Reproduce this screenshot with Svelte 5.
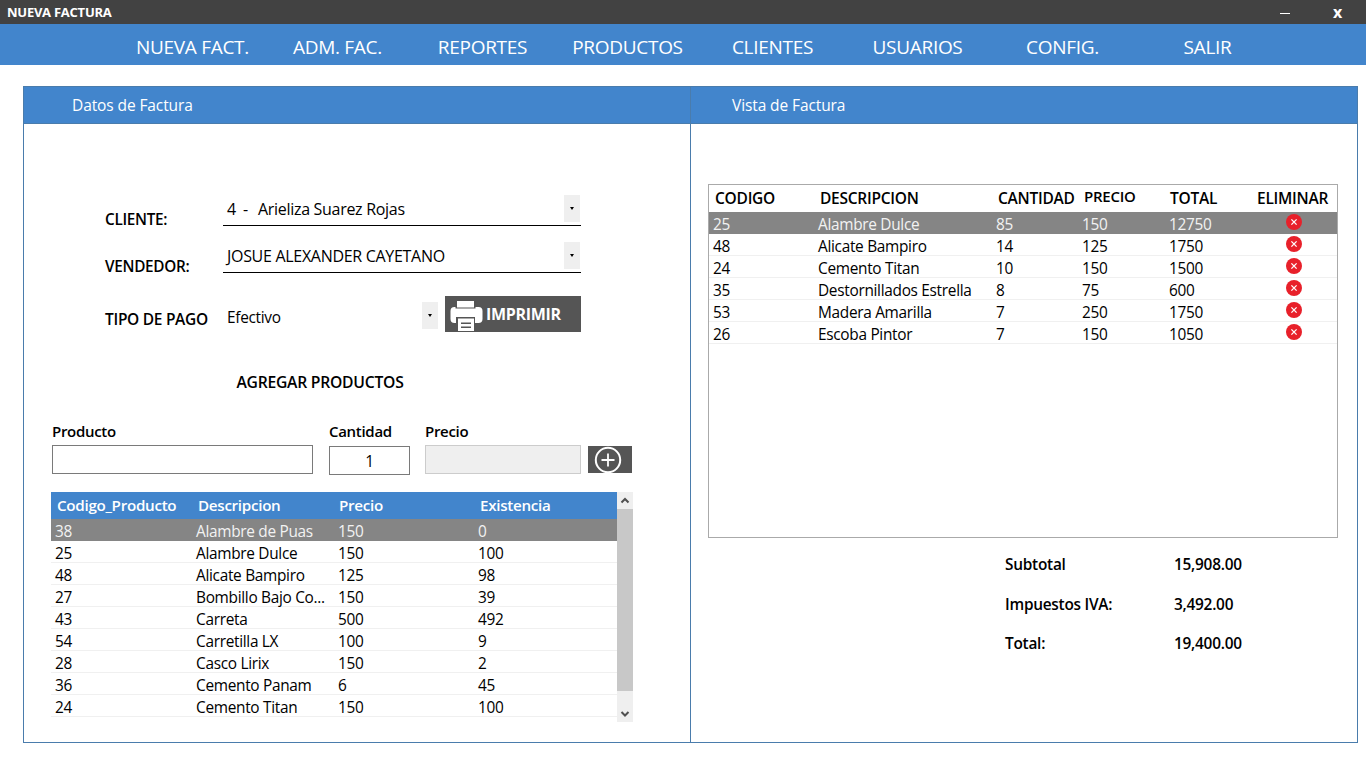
<script>
  const nav = ['NUEVA FACT.', 'ADM. FAC.', 'REPORTES', 'PRODUCTOS', 'CLIENTES', 'USUARIOS', 'CONFIG.', 'SALIR'];
  const productos = [
    ['38', 'Alambre de Puas', '150', '0'],
    ['25', 'Alambre Dulce', '150', '100'],
    ['48', 'Alicate Bampiro', '125', '98'],
    ['27', 'Bombillo Bajo Co...', '150', '39'],
    ['43', 'Carreta', '500', '492'],
    ['54', 'Carretilla LX', '100', '9'],
    ['28', 'Casco Lirix', '150', '2'],
    ['36', 'Cemento Panam', '6', '45'],
    ['24', 'Cemento Titan', '150', '100']
  ];
  const factura = [
    ['25', 'Alambre Dulce', '85', '150', '12750'],
    ['48', 'Alicate Bampiro', '14', '125', '1750'],
    ['24', 'Cemento Titan', '10', '150', '1500'],
    ['35', 'Destornillados Estrella', '8', '75', '600'],
    ['53', 'Madera Amarilla', '7', '250', '1750'],
    ['26', 'Escoba Pintor', '7', '150', '1050']
  ];
  const totales = [['Subtotal', '15,908.00'], ['Impuestos IVA:', '3,492.00'], ['Total:', '19,400.00']];
</script>

<div class="page">
  <header class="title">
    <span class="title-text">NUEVA FACTURA</span>
    <span class="win-min"></span>
    <span class="win-close">x</span>
  </header>
  <nav class="nav">
    {#each nav as item}<span>{item}</span>{/each}
  </nav>

  <main class="panel">
    <section class="side">
      <h2>Datos de Factura</h2>
      <div class="form">
        <div class="row">
          <label>CLIENTE:</label>
          <div class="combo"><span><b>4</b>Arieliza Suarez Rojas</span><i class="arrow"></i></div>
        </div>
        <div class="row second">
          <label>VENDEDOR:</label>
          <div class="combo"><span>JOSUE ALEXANDER CAYETANO</span><i class="arrow"></i></div>
        </div>
        <div class="row third">
          <label>TIPO DE PAGO</label>
          <div class="pay">
            <span class="pay-value">Efectivo</span>
            <i class="arrow"></i>
            <button class="print">
              <svg width="33" height="33" viewBox="0 0 33 33">
                <path fill="#fff" d="M4.500 7h24a4 4 0 0 1 4 4v8a4 4 0 0 1-4 4H25v-6H6v6H4.500a4 4 0 0 1-4-4v-8a4 4 0 0 1 4-4z"/>
                <path fill="#555" d="M5.500 0h20v8.500h-20z"/>
                <path fill="#fff" d="M7 1h17v6.500H7z"/>
                <path fill="#fff" d="M8 18.500h16V31H8z"/>
                <path fill="#555" d="M11 22.500h10v1.400H11zM11 26.500h10v1.400H11z"/>
              </svg>
              <span>IMPRIMIR</span>
            </button>
          </div>
        </div>
      </div>

      <h3>AGREGAR PRODUCTOS</h3>

      <div class="fields">
        <div class="f f-prod"><label>Producto</label><div class="input"></div></div>
        <div class="f f-cant"><label>Cantidad</label><div class="input qty">1</div></div>
        <div class="f f-prec"><label>Precio</label><div class="input off"></div></div>
        <button class="add" aria-label="Agregar">
          <svg width="28" height="28" viewBox="0 0 28 28" fill="none" stroke="#fff">
            <circle cx="14" cy="14" r="12.200" stroke-width="2"/>
            <path d="M14 7.500v13M7.500 14h13" stroke-width="1.800"/>
          </svg>
        </button>
      </div>

      <div class="prod-wrap">
        <div class="prod-table">
          <div class="prod-row head">
            <span>Codigo_Producto</span><span>Descripcion</span><span>Precio</span><span>Existencia</span>
          </div>
          {#each productos as p, i}
            <div class="prod-row" class:sel={i === 0}>
              {#each p as c}<span>{c}</span>{/each}
            </div>
          {/each}
        </div>
        <div class="scroll">
          <svg class="chev" width="16" height="17" viewBox="0 0 16 17"><path d="M4.500 10.500 8 7l3.500 3.500" fill="none" stroke="#505050" stroke-width="2"/></svg>
          <div class="thumb"></div>
          <svg class="chev" width="16" height="31" viewBox="0 0 16 31"><path d="M4.500 21 8 24.500l3.500-3.500" fill="none" stroke="#505050" stroke-width="2"/></svg>
        </div>
      </div>
    </section>

    <section class="side right">
      <h2>Vista de Factura</h2>
      <div class="inv">
        <div class="inv-row inv-head">
          <span>CODIGO</span><span>DESCRIPCION</span><span>CANTIDAD</span><span class="up">PRECIO</span><span>TOTAL</span><span>ELIMINAR</span>
        </div>
        {#each factura as r, i}
          <div class="inv-row" class:sel={i === 0}>
            {#each r as c}<span>{c}</span>{/each}
            <span class="del">
              <svg width="16" height="16" viewBox="0 0 16 16">
                <circle cx="8" cy="8" r="8" fill="#e8202a"/>
                <path d="M5.400 5.400l5.200 5.200M10.600 5.400l-5.200 5.200" stroke="#fff" stroke-width="1.300"/>
              </svg>
            </span>
          </div>
        {/each}
      </div>
      <div class="totals">
        {#each totales as t}
          <div class="tot"><span>{t[0]}</span><span>{t[1]}</span></div>
        {/each}
      </div>
    </section>
  </main>
</div>

<style>
  :global(body) { margin: 0; background: #fff; }
  .page {
    width: 1366px; height: 768px; overflow: hidden; background: #fff; color: #000;
    font-family: "Open Sans", "Noto Sans", sans-serif; font-size: 15.400px; letter-spacing: -0.3px;
  }
  .title {
    height: 24px; background: #424242; color: #fff; display: flex; align-items: center;
    padding-left: 7px; font-size: 13px; font-weight: 700; letter-spacing: -0.25px;
  }
  .title-text { flex: 1; }
  .win-min { width: 10px; height: 1px; background: #fff; margin: 3px 47px 0 0; }
  .win-close { width: 24px; font-size: 16px; margin-right: 5px; text-align: left; line-height: 24px; margin-left: 0; position: relative; left: -4px; }
  .nav {
    height: 41px; background: #4285cc; color: #fff; display: grid;
    grid-template-columns: repeat(8, 145px); padding-left: 120px;
    align-items: center; font-size: 19px; letter-spacing: -0.3px; font-weight: 500;
  }
  .nav span { text-align: center; padding-top: 4px; }
  .panel {
    margin: 21px 0 0 23px; width: 1335px; height: 657px; box-sizing: border-box;
    border: 1px solid #4a7cac; display: grid; grid-template-columns: 667px 666px;
  }
  .side { height: 655px; position: relative; }
  .right { border-left: 1px solid #4a7cac; width: 667px; margin-left: -1px; box-sizing: border-box; }
  h2 {
    margin: 0; height: 37px; box-sizing: border-box; background: #4285cc; color: #fff;
    border-bottom: 1px solid #4a7cac; font-size: 15.500px; line-height: 37px;
    padding-left: 48px; letter-spacing: -0.1px; font-weight: 500;
  }
  .right h2 { padding-left: 41px; }
  label { font-weight: 600; font-size: 15px; letter-spacing: -0.3px; }
  .form { padding: 71px 0 0 81px; }
  .row { display: flex; height: 31px; }
  .row label { width: 118px; padding-top: 14px; line-height: 20px; font-size: 15.300px; }
  .second { margin-top: 16px; }
  .third { margin-top: 23px; height: 36px; }
  .third label { padding-top: 13px; font-size: 15.500px; }
  .combo {
    width: 358px; box-sizing: border-box; border-bottom: 1.500px solid #000; height: 31px;
    display: flex; padding-left: 4px; justify-content: space-between; line-height: 29px; font-size: 16px;
  }
  .combo b { font-weight: 400; display: inline-block; width: 31px; position: relative; }
  .combo b::after { content: '-'; position: absolute; left: 16px; }
  .arrow {
    flex: none; width: 16px; height: 27px; background: #efefef; display: block; position: relative; margin-right: 1px;
  }
  .arrow::after {
    content: ''; position: absolute; left: 6px; top: 12px;
    border: 2.500px solid transparent; border-top: 3px solid #000; border-bottom: 0;
  }
  .pay { display: flex; width: 358px; }
  .pay-value { width: 199px; padding: 11px 0 0 4px; box-sizing: border-box; line-height: 22px; }
  .pay .arrow { margin: 6px 7px 0 0; }
  .print {
    width: 136px; height: 36px; background: #555; border: 0; padding: 0 0 0 5px; display: flex;
    align-items: flex-start; color: #fff; font: inherit; font-weight: 700; font-size: 16px; letter-spacing: -0.3px;
  }
  .print svg { margin-top: 4px; flex: none; }
  .print span { margin: 8px 0 0 3px; line-height: 20px; }
  h3 { margin: 39px 0 0; text-align: center; padding-right: 75px; font-size: 15.700px; font-weight: 600; line-height: 22px; letter-spacing: -0.25px; }
  .fields { display: flex; padding-left: 28px; margin-top: 28px; align-items: flex-start; }
  .f label { display: block; line-height: 20px; }
  .input {
    box-sizing: border-box; height: 29px; border: 1px solid #7a7a7a; margin-top: 4px;
    text-align: center; line-height: 28px; font-size: 15.500px;
  }
  .f-prod { width: 261px; }
  .f-cant { width: 81px; margin-left: 16px; }
  .f-cant .input { margin-top: 5px; }
  .f-prec { width: 156px; margin-left: 15px; }
  .off { background: #efefef; border-color: #ccc; }
  .add {
    width: 44px; height: 27px; margin: 25px 0 0 7px; background: #555; border: 0; padding: 0;
    display: flex; align-items: center; justify-content: center; overflow: visible;
  }
  .add svg { margin: 1px 4px 0 0; flex: none; }
  .prod-wrap { display: flex; margin: 17px 0 0 27px; }
  .prod-table { width: 566px; }
  .prod-row {
    display: grid; grid-template-columns: 141px 142px 140px 139px; height: 22px; box-sizing: border-box;
    border-bottom: 1px solid #f0f0f0; line-height: 22px; padding: 2px 0 0 4px; font-size: 15.400px;
  }
  .prod-row.head {
    height: 27px; background: #4285cc; color: #fff; border: 0; font-weight: 600; font-size: 15.200px;
    line-height: 27px; padding: 0 0 0 6px; letter-spacing: -0.3px; grid-template-columns: 141px 141px 141px 139px;
  }
  .sel { background: #858585; color: #f2f2f2; border-bottom-color: #858585 !important; }
  .scroll { width: 16px; height: 230px; background: #efefef; display: flex; flex-direction: column; }
  .chev { display: block; flex: none; }
  .thumb { height: 182px; background: #c8c8c8; flex: none; }
  .inv {
    margin: 60px 0 0 17px; width: 630px; height: 354px; box-sizing: border-box;
    border: 1px solid #aaa;
  }
  .inv-row {
    display: grid; grid-template-columns: 105px 178px 86px 87px 88px 1fr; height: 22px; box-sizing: border-box;
    border-bottom: 1px solid #f0f0f0; line-height: 22px; padding: 2px 0 0 4px; font-size: 15.400px;
  }
  .inv-head {
    height: 27px; border: 0; line-height: 27px; font-weight: 600; font-size: 15.500px; padding: 0 0 0 6px;
    grid-template-columns: 105px 178px 86px 86px 87px 1fr; letter-spacing: -0.25px;
  }
  .up { position: relative; top: -2px; font-size: 15px; }
  .del { display: flex; justify-content: center; padding: 0 6px 0 0; line-height: 0; }
  .totals { padding: 16px 0 0 314px; }
  .tot { display: flex; height: 39.500px; line-height: 22px; font-weight: 600; font-size: 15.400px; letter-spacing: -0.25px; }
  .tot span:first-child { width: 169px; }
</style>
